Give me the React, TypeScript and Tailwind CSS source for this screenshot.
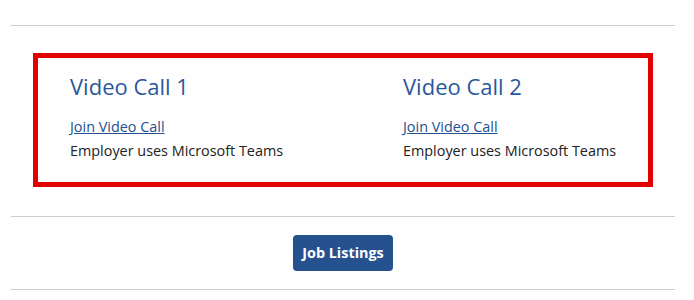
export default function App() {
  const calls = [
    { id: 1, provider: 'Microsoft Teams' },
    { id: 2, provider: 'Microsoft Teams' },
  ];

  return (
    <div className="min-h-[300px] bg-[#fefefe] font-['Open_Sans',sans-serif] text-[#222]">
      <div className="ml-[11px] w-[664px] pt-[25px]">
        <hr className="border-0 border-t border-[#cccccc]" />

        {/* Video calls */}
        <div className="mt-[27px] mx-[22px] border-[5px] border-[#e50000] pl-[32px] pt-[15px] pb-[19px]">
          <div className="grid grid-cols-[333px_1fr]">
            {calls.map((call) => (
              <div key={call.id}>
                <h3 className="text-[22px] leading-[27px] text-[#2b579a]">Video Call {call.id}</h3>
                <a href="#" className="mt-[15px] block text-[14.4px] leading-6 text-[#23508f] underline">
                  Join Video Call
                </a>
                <p className="text-[14.4px] leading-6">Employer uses {call.provider}</p>
              </div>
            ))}
          </div>
        </div>

        <hr className="mt-[29px] border-0 border-t border-[#cccccc]" />
        <div className="flex justify-center pt-[18px] pb-[18px]">
          <button className="h-[36px] rounded-[4px] bg-[#25518f] px-[9px] text-[14.4px] font-bold text-white">
            Job Listings
          </button>
        </div>
        <hr className="border-0 border-t border-[#cccccc]" />
      </div>
    </div>
  );
}
